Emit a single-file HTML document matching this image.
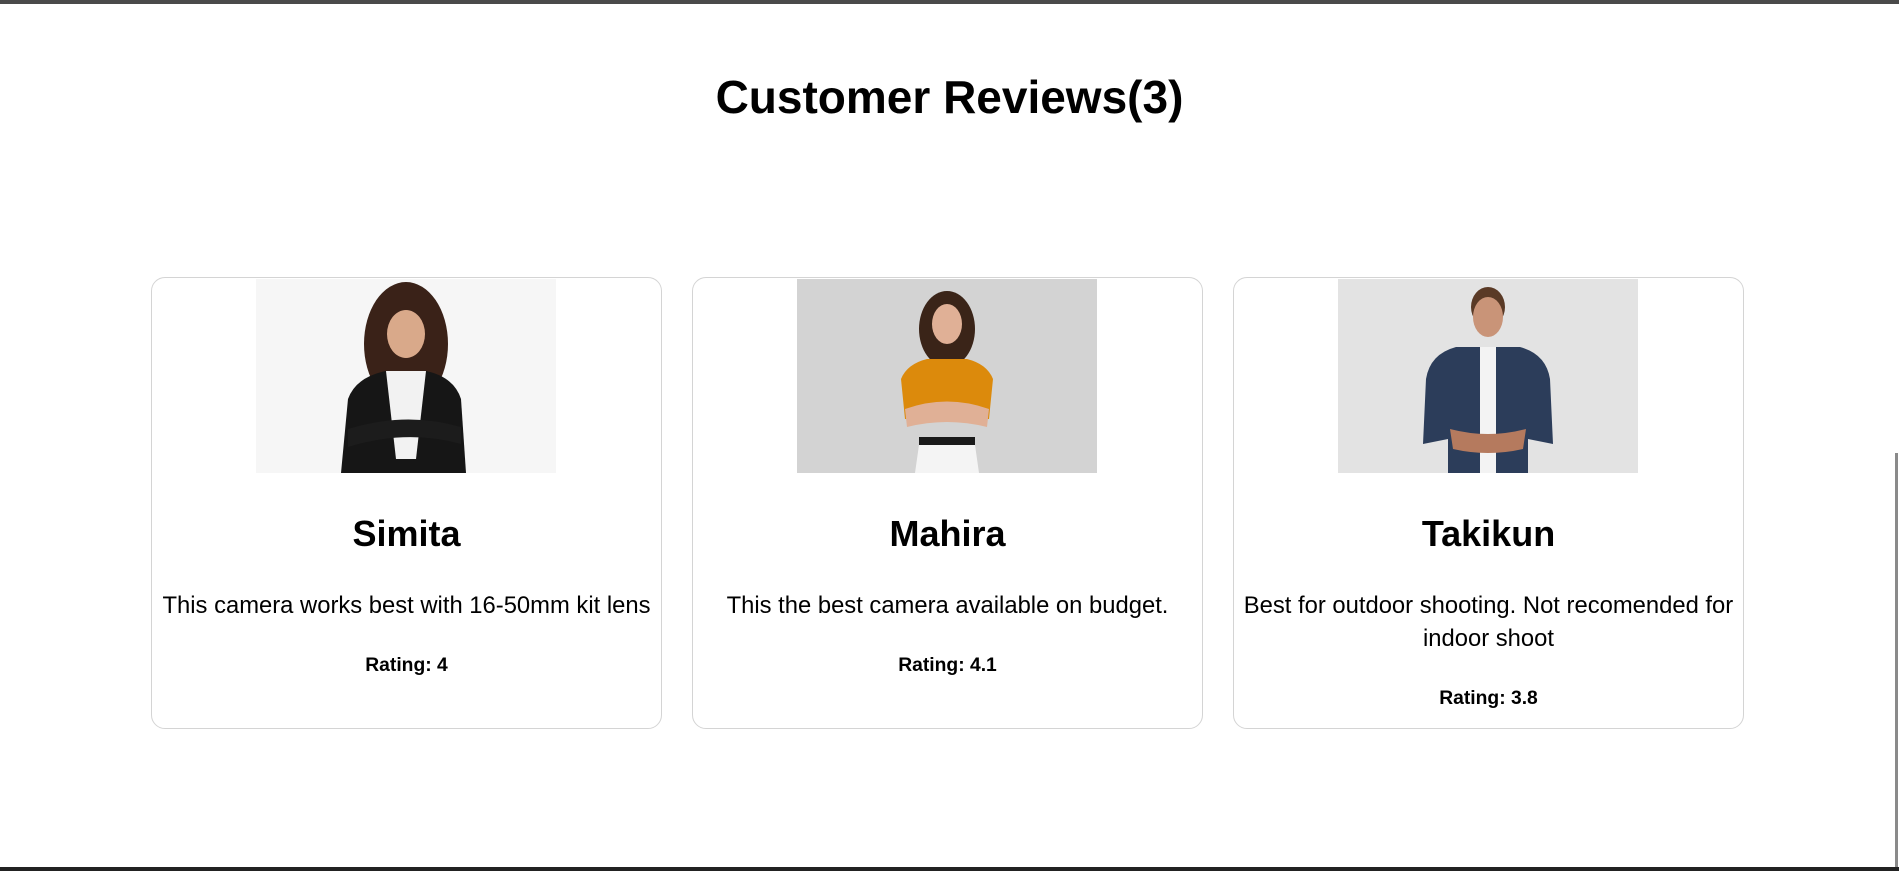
<!DOCTYPE html>
<html><head><meta charset="utf-8"><style>
html,body{margin:0;padding:0;width:1899px;height:871px;overflow:hidden;background:#fff;font-family:"Liberation Sans",sans-serif;color:#000}
.topbar{position:absolute;left:0;top:0;width:1899px;height:4px;background:#4a4a4a}
.botbar{position:absolute;left:0;top:867px;width:1899px;height:4px;background:#222}
.thumb{position:absolute;left:1895px;top:453px;width:3px;height:414px;background:#8a8a8a}
h1{position:absolute;left:0;width:1899px;top:72px;margin:0;text-align:center;font-size:46px;font-weight:bold;line-height:50px}
.card{position:absolute;top:277px;width:509px;height:450px;border:1px solid #d4d4d4;border-radius:14px;text-align:center}
.img{position:absolute;left:104px;top:1px;width:300px;height:194px;overflow:hidden}
.name{position:absolute;left:0;width:100%;top:236px;font-size:36px;font-weight:bold;line-height:40px}
.desc{position:absolute;left:-5px;width:519px;top:311px;font-size:23.8px;line-height:33px;white-space:nowrap}
.rate{position:absolute;left:0;width:100%;font-size:19.3px;font-weight:bold;line-height:22px}
</style></head><body>
<div class="topbar"></div>
<h1>Customer Reviews(3)</h1>

<div class="card" style="left:151px">
 <div class="img" style="background:#f6f6f6">
  <svg width="300" height="194" viewBox="0 0 300 194">
   <ellipse cx="150" cy="65" rx="42" ry="62" fill="#3a2218"/>
   <path d="M85 194 L92 120 Q100 98 130 92 L170 92 Q198 98 205 120 L210 194Z" fill="#161616"/>
   <path d="M130 92 L170 92 L160 180 L140 180Z" fill="#f2f2f2"/>
   <ellipse cx="150" cy="55" rx="19" ry="24" fill="#d9a98a"/>
   <path d="M92 150 Q150 132 205 148 L205 165 Q150 150 92 168Z" fill="#1c1c1c"/>
  </svg>
 </div>
 <div class="name">Simita</div>
 <div class="desc">This camera works best with 16-50mm kit lens</div>
 <div class="rate" style="top:377px">Rating: 4</div>
</div>

<div class="card" style="left:692px">
 <div class="img" style="background:#d3d3d3">
  <svg width="300" height="194" viewBox="0 0 300 194">
   <ellipse cx="150" cy="50" rx="28" ry="38" fill="#3a2418"/>
   <path d="M108 140 L104 100 Q110 85 130 80 L170 80 Q190 85 196 100 L192 140Z" fill="#dc8a0c"/>
   <ellipse cx="150" cy="45" rx="15" ry="20" fill="#e0b096"/>
   <path d="M108 130 Q150 115 192 130 L190 148 Q150 138 110 148Z" fill="#e0b096"/>
   <rect x="122" y="158" width="56" height="8" fill="#1a1a1a"/>
   <path d="M122 166 L178 166 L182 194 L118 194Z" fill="#f4f4f4"/>
  </svg>
 </div>
 <div class="name">Mahira</div>
 <div class="desc">This the best camera available on budget.</div>
 <div class="rate" style="top:377px">Rating: 4.1</div>
</div>

<div class="card" style="left:1233px">
 <div class="img" style="background:#e3e3e3">
  <svg width="300" height="194" viewBox="0 0 300 194">
   <ellipse cx="150" cy="28" rx="17" ry="20" fill="#5a3a26"/>
   <ellipse cx="150" cy="38" rx="15" ry="20" fill="#c99478"/>
   <path d="M85 165 L88 100 Q92 75 118 68 L182 68 Q208 75 212 100 L215 165 L190 160 L190 194 L110 194 L110 160Z" fill="#2c3d5a"/>
   <rect x="142" y="68" width="16" height="126" fill="#f3f3f3"/>
   <path d="M112 150 Q150 160 188 150 L185 170 Q150 178 115 170Z" fill="#b57a5e"/>
  </svg>
 </div>
 <div class="name">Takikun</div>
 <div class="desc">Best for outdoor shooting. Not recomended for<br>indoor shoot</div>
 <div class="rate" style="top:410px">Rating: 3.8</div>
</div>

<div class="thumb"></div>
<div class="botbar"></div>
</body></html>
